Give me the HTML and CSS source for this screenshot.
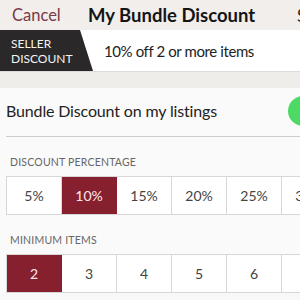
FILE: index.html
```html
<!DOCTYPE html>
<html lang="en">
<head>
    <meta charset="UTF-8">
    <meta name="viewport" content="width=device-width, initial-scale=1.0">
    <title>My Bundle Discount</title>
    <link rel="stylesheet" href="styles.css">
</head>
<body>
    <!-- Top navigation -->
    <div class="nav">
        <span class="nav-cancel">Cancel</span>
        <span class="nav-title">My Bundle Discount</span>
        <span class="nav-save">Save</span>
    </div>

    <!-- Seller discount banner -->
    <div class="banner">
        <div class="banner-tag">SELLER<br>DISCOUNT</div>
        <div class="banner-text">10% off 2 or more items</div>
    </div>
    <div class="spacer"></div>

    <div class="panel">
        <div class="toggle-row">
            <span>Bundle Discount on my listings</span>
            <span class="switch"></span>
        </div>

        <div class="label">DISCOUNT PERCENTAGE</div>
        <div class="segments">
            <div class="seg">5%</div>
            <div class="seg active">10%</div>
            <div class="seg">15%</div>
            <div class="seg">20%</div>
            <div class="seg">25%</div>
            <div class="seg">30%</div>
        </div>

        <div class="label">MINIMUM ITEMS</div>
        <div class="segments">
            <div class="seg active">2</div>
            <div class="seg">3</div>
            <div class="seg">4</div>
            <div class="seg">5</div>
            <div class="seg">6</div>
            <div class="seg">7</div>
        </div>
    </div>
</body>
</html>
```

FILE: styles.css
```css
body {
    font-family: Lato, "Open Sans", sans-serif;
    margin: 0;
    padding: 0;
    width: 300px;
    height: 300px;
    overflow: hidden;
    background-color: #f9f8f8;
    color: #222;
}

.nav {
    height: 30px;
    display: flex;
    align-items: center;
    background-color: #f1eeeb;
    white-space: nowrap;
}

.nav-cancel {
    width: 76px;
    flex: 0 0 76px;
    color: #7a3a48;
    font-size: 16.5px;
    padding-left: 12px;
}

.nav-title {
    flex: 0 0 209px;
    font-size: 18.5px;
    font-weight: bold;
    color: #151515;
}

.nav-save {
    font-size: 17px;
    color: #222;
}

.banner {
    height: 41px;
    display: flex;
    align-items: center;
    background: #fff;
    border-bottom: 1px solid #dedbd8;
}

.banner-tag {
    height: 41px;
    width: 93px;
    box-sizing: border-box;
    padding: 6px 0 0 11px;
    background: #2a2828;
    color: #f4f4f4;
    font-size: 12px;
    line-height: 15px;
    clip-path: polygon(0 0, 80px 0, 93px 100%, 0 100%);
}

.banner-text {
    margin-left: 11px;
    font-size: 15px;
    letter-spacing: -0.4px;
    color: #222;
}

.spacer {
    height: 16px;
    background: #efedea;
}

.panel {
    background: #fbfafa;
    padding-left: 6px;
}

.toggle-row {
    height: 45px;
    padding-bottom: 3px;
    display: flex;
    align-items: center;
    justify-content: space-between;
    font-size: 16px;
    letter-spacing: -0.15px;
    border-bottom: 1px solid #cfcccb;
    overflow: hidden;
}

.switch {
    width: 30px;
    height: 30px;
    margin-right: -18px;
    border-radius: 15px;
    background: #4cd964;
}

.label {
    font-size: 10.5px;
    color: #666;
    padding: 19px 0 8px 4px;
    letter-spacing: 0.2px;
}

.segments {
    display: flex;
    border-top: 1px solid #d8d6d6;
    border-bottom: 1px solid #d8d6d6;
    border-left: 1px solid #d8d6d6;
    background: #fff;
}

.seg {
    flex: 0 0 54px;
    height: 37px;
    display: flex;
    align-items: center;
    justify-content: center;
    font-size: 14px;
    color: #444;
    border-right: 1px solid #d8d6d6;
}

.seg.active {
    background: #86202f;
    color: #fbe8ea;
    border-right-color: #86202f;
}
```
